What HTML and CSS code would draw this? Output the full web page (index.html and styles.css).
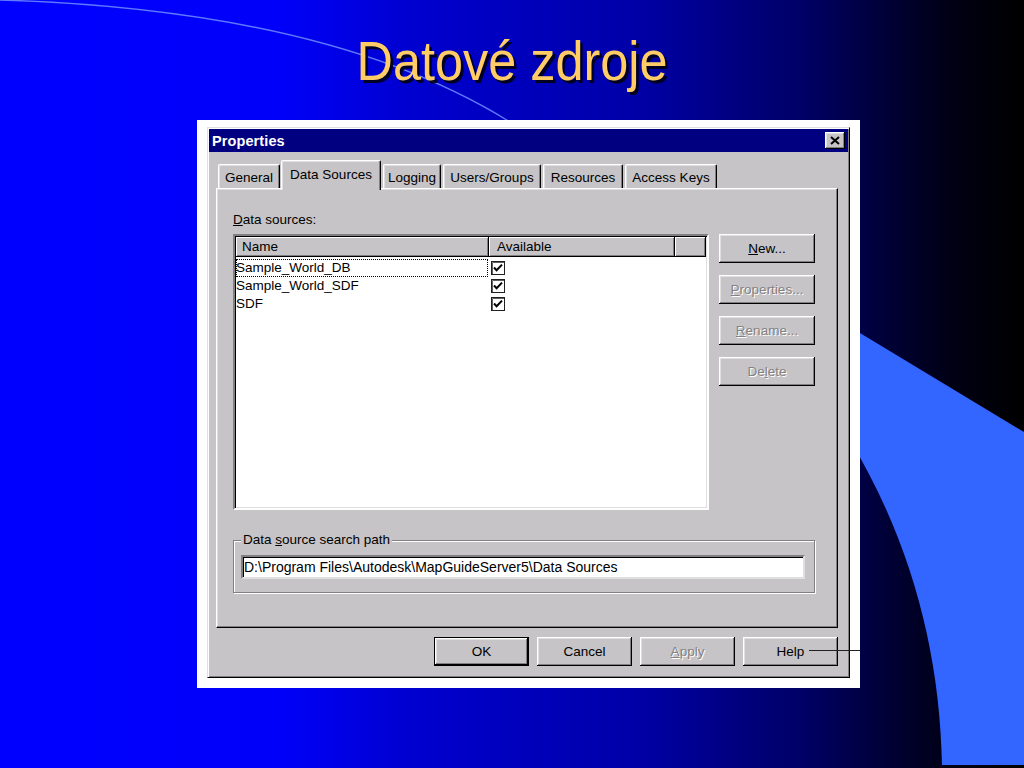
FILE: index.html
```html
<!DOCTYPE html>
<html lang="cs">
<head>
<meta charset="utf-8">
<title>Datové zdroje</title>
<link rel="stylesheet" href="styles.css">
</head>
<body>
<div class="slide">
  <svg class="backdrop" width="1024" height="768" viewBox="0 0 1024 768">
    <path class="arc" d="M 0 0 Q 330 10 510 122"/>
    <path class="wing" d="M 850 327 L 1024 432 L 1024 765 L 942 765 C 940 650 910 540 850 440 Z"/>
  </svg>

  <h1 class="title">Datové zdroje</h1>

  <div class="frame">
    <div class="dialog">
      <div class="titlebar">
        <span class="caption">Properties</span>
        <span class="close">
          <svg width="10" height="9" viewBox="0 0 10 9"><path d="M1 1 L9 8 M9 1 L1 8" stroke="#000" stroke-width="2" fill="none"/></svg>
        </span>
      </div>

      <div class="tabs">
        <div class="tab t-general">General</div>
        <div class="tab active t-data">Data Sources</div>
        <div class="tab t-logging">Logging</div>
        <div class="tab t-users">Users/Groups</div>
        <div class="tab t-resources">Resources</div>
        <div class="tab t-keys">Access Keys</div>
      </div>

      <div class="panel">
        <div class="field-label"><u>D</u>ata sources:</div>
        <div class="content">
          <div class="list">
            <div class="list-head">
              <div class="hcell c-name">Name</div>
              <div class="hcell c-avail">Available</div>
              <div class="hcell c-rest"></div>
            </div>
            <div class="rows">
              <div class="row">
                <div class="cell c-name focus">Sample_World_DB</div>
                <div class="cell c-avail"><svg class="check" width="14" height="14" viewBox="0 0 14 14"><rect x="0.5" y="0.5" width="13" height="13" fill="#fff" stroke="#202020"/><path d="M1.5 13 V1.5 H13" fill="none" stroke="#606060"/><path d="M3 6.5 L5.6 9.3 L11 3.6" fill="none" stroke="#000" stroke-width="2"/></svg></div>
              </div>
              <div class="row">
                <div class="cell c-name">Sample_World_SDF</div>
                <div class="cell c-avail"><svg class="check" width="14" height="14" viewBox="0 0 14 14"><rect x="0.5" y="0.5" width="13" height="13" fill="#fff" stroke="#202020"/><path d="M1.5 13 V1.5 H13" fill="none" stroke="#606060"/><path d="M3 6.5 L5.6 9.3 L11 3.6" fill="none" stroke="#000" stroke-width="2"/></svg></div>
              </div>
              <div class="row">
                <div class="cell c-name">SDF</div>
                <div class="cell c-avail"><svg class="check" width="14" height="14" viewBox="0 0 14 14"><rect x="0.5" y="0.5" width="13" height="13" fill="#fff" stroke="#202020"/><path d="M1.5 13 V1.5 H13" fill="none" stroke="#606060"/><path d="M3 6.5 L5.6 9.3 L11 3.6" fill="none" stroke="#000" stroke-width="2"/></svg></div>
              </div>
            </div>
          </div>
          <div class="side">
            <button class="btn"><u>N</u>ew...</button>
            <button class="btn disabled"><u>P</u>roperties...</button>
            <button class="btn disabled"><u>R</u>ename...</button>
            <button class="btn disabled">De<u>l</u>ete</button>
          </div>
        </div>

        <fieldset class="group">
          <legend class="group-label">Data <u>s</u>ource search path</legend>
          <div class="textbox">D:\Program Files\Autodesk\MapGuideServer5\Data Sources</div>
        </fieldset>
      </div>

      <div class="footer">
        <button class="btn default">OK</button>
        <button class="btn">Cancel</button>
        <button class="btn disabled"><u>A</u>pply</button>
        <button class="btn">Help</button>
      </div>
    </div>
  </div>

  <div class="pointer"></div>
</div>
</body>
</html>
```

FILE: styles.css
```css
* { box-sizing: border-box; }

html, body {
  margin: 0;
  padding: 0;
  background: #000;
}

body {
  width: 1024px;
  height: 768px;
  overflow: hidden;
}

.slide {
  position: relative;
  width: 1024px;
  height: 768px;
  overflow: hidden;
  padding-top: 29px;
  font-family: "Liberation Sans", Arial, sans-serif;
  background: linear-gradient(to right,
    #0000ff 0%,
    #0000fa 27%,
    #0000d0 40%,
    #0000a8 62%,
    #000068 78%,
    #00003a 86%,
    #000014 93%,
    #000000 100%);
}

.backdrop {
  position: absolute;
  left: 0;
  top: 0;
}

.arc {
  fill: none;
  stroke: #6f8dff;
  stroke-width: 1.4;
  opacity: 0.85;
}

.wing {
  fill: #3366ff;
}

.title {
  position: relative;
  margin: 0;
  height: 64px;
  font-family: "Liberation Sans", Arial, sans-serif;
  font-weight: normal;
  font-size: 56px;
  line-height: 64px;
  text-align: center;
  color: #ffcc66;
  text-shadow: 3px 3px 0 rgba(0, 0, 20, 0.9);
  transform: scaleX(0.9);
}

/* white picture frame around the screenshot */
.frame {
  position: relative;
  margin: 27px 0 0 197px;
  width: 663px;
  height: 568px;
  padding: 7px 10px 10px 10px;
  background: #ffffff;
}

.dialog {
  width: 643px;
  height: 551px;
  padding: 1px;
  background: #c6c4c6;
  border: 1px solid;
  border-color: #dfdfdf #000 #000 #dfdfdf;
  box-shadow: inset 1px 1px #fff, inset -1px -1px #808080;
  font-size: 13.5px;
  color: #000;
}

.titlebar {
  display: flex;
  align-items: center;
  justify-content: space-between;
  height: 23px;
  padding: 0 3px 0 3px;
  background: #000080;
}

.caption {
  color: #fff;
  font-weight: bold;
  font-size: 14.5px;
  letter-spacing: 0.1px;
}

.close {
  display: flex;
  align-items: center;
  justify-content: center;
  width: 20px;
  height: 17px;
  background: #c6c4c6;
  box-shadow: inset -1px -1px #000, inset 1px 1px #fff, inset -2px -2px #808080, inset 2px 2px #dfdfdf;
}

/* tabs */
.tabs {
  display: flex;
  align-items: flex-end;
  height: 36px;
  padding-left: 9px;
}

.tab {
  height: 24px;
  padding-top: 5px;
  margin-right: 2px;
  line-height: 16px;
  text-align: center;
  white-space: nowrap;
  background: #c6c4c6;
  border-top: 1px solid #fff;
  border-left: 1px solid #fff;
  border-right: 1px solid #000;
  border-radius: 2px 2px 0 0;
  box-shadow: inset -1px 0 #808080, inset 1px 1px #dfdfdf;
}

.tab.active {
  position: relative;
  z-index: 2;
  height: 30px;
  margin-bottom: -2px;
  padding-top: 6px;
}

.t-general { width: 62px; margin-right: 1px; }
.t-data { width: 100px; }
.t-logging { width: 58px; }
.t-users { width: 98px; }
.t-resources { width: 80px; }
.t-keys { width: 92px; }

/* tab page */
.panel {
  position: relative;
  height: 440px;
  margin: 0 10px 0 7px;
  padding: 23px 22px 0 16px;
  border: 1px solid;
  border-color: #fff #000 #000 #fff;
  box-shadow: inset -1px -1px #808080, inset 1px 1px #dfdfdf;
}

.field-label {
  height: 16px;
  line-height: 16px;
  margin-bottom: 6px;
}

.content {
  display: flex;
  gap: 10px;
  height: 276px;
}

.list {
  width: 476px;
  height: 276px;
  padding: 1px;
  background: #fff;
  border: 2px solid;
  border-color: #808080 #fff #fff #808080;
  box-shadow: inset 1px 1px #000, inset -1px -1px #dfdfdf;
}

.list-head {
  display: flex;
  height: 20px;
}

.hcell {
  height: 20px;
  line-height: 20px;
  padding-left: 6px;
  background: #c6c4c6;
  box-shadow: inset -1px -1px #000, inset 1px 1px #fff, inset -2px -2px #808080;
  white-space: nowrap;
}

.hcell.c-name { width: 253px; }
.hcell.c-avail { width: 186px; padding-left: 8px; }
.hcell.c-rest { flex: 1; }

.rows {
  padding-top: 2px;
}

.row {
  display: flex;
  height: 18px;
  line-height: 17px;
}

.cell.c-name {
  width: 252px;
  padding-left: 0;
  white-space: nowrap;
}

.cell.focus {
  outline: 1px dotted #000;
  outline-offset: -1px;
}

.cell.c-avail {
  display: flex;
  align-items: center;
  padding-left: 3px;
}

.check {
  display: block;
}

.side {
  display: flex;
  flex-direction: column;
  gap: 12px;
  width: 96px;
}

/* buttons */
.btn {
  display: block;
  height: 29px;
  padding: 0;
  margin: 0;
  border: none;
  background: #c6c4c6;
  font-family: "Liberation Sans", Arial, sans-serif;
  font-size: 13.5px;
  color: #000;
  text-align: center;
  box-shadow: inset -1px -1px #000, inset 1px 1px #fff, inset -2px -2px #808080, inset 2px 2px #dfdfdf;
}

.btn.default {
  border: 1px solid #000;
}

.btn.disabled {
  color: #848284;
  text-shadow: 1px 1px 0 #fff;
}

/* group box */
.group {
  width: 582px;
  margin: 22px 0 0 0;
  padding: 7px 9px 13px 7px;
  border: 1px solid #808080;
  box-shadow: inset 1px 1px #fff, 1px 1px #fff;
  min-width: 0;
}

.group-label {
  padding: 0 2px;
  line-height: 16px;
  background: #c6c4c6;
}

.textbox {
  height: 24px;
  padding-left: 1px;
  line-height: 20px;
  font-size: 14px;
  white-space: nowrap;
  background: #fff;
  border: 2px solid;
  border-color: #808080 #dfdfdf #dfdfdf #808080;
  box-shadow: inset 1px 1px #000;
}

/* dialog buttons */
.footer {
  display: flex;
  justify-content: flex-end;
  gap: 8px;
  padding: 9px 10px 0 0;
}

.footer .btn {
  width: 95px;
}

/* callout line from the Help button */
.pointer {
  position: absolute;
  left: 809px;
  top: 650px;
  width: 51px;
  height: 1px;
  background: #222;
}
```
